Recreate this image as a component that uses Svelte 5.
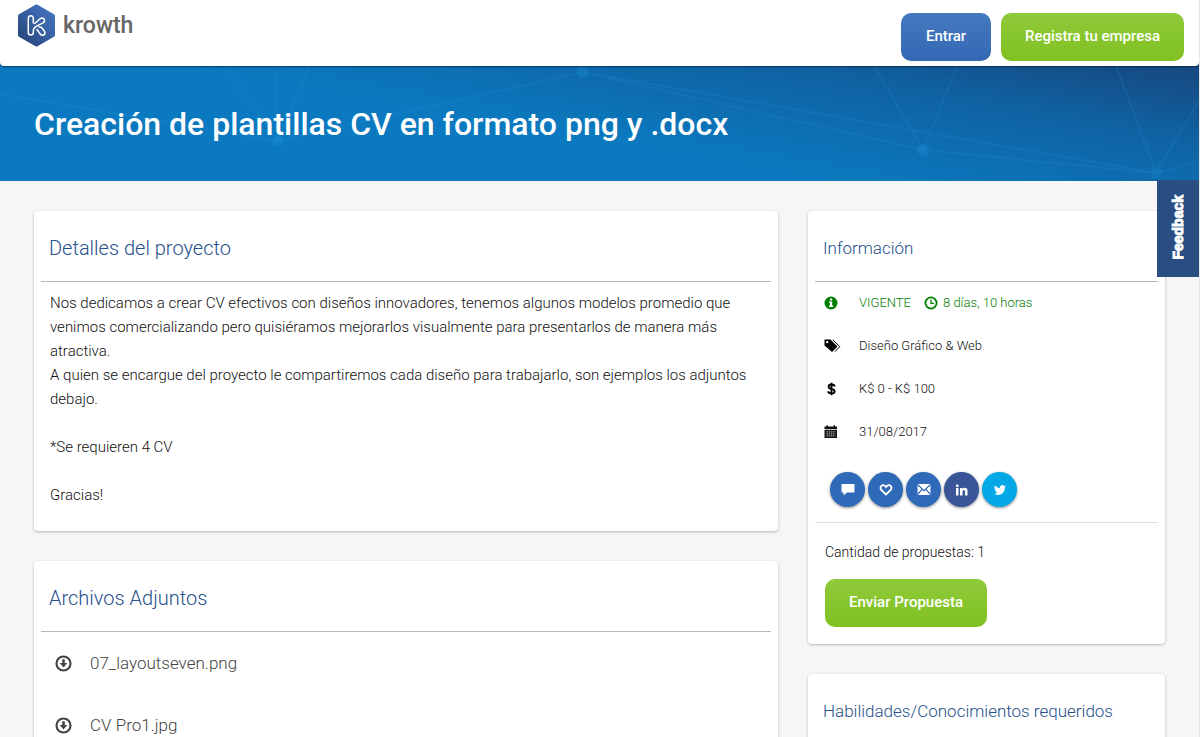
<script>
  const files = ['07_layoutseven.png', 'CV Pro1.jpg'];
</script>

<svelte:head><title>Krowth</title></svelte:head>

<div class="page">
  <header class="topbar">
    <a class="brand" href="#inicio" aria-label="krowth">
      <svg width="40" height="44" viewBox="0 0 40 44" aria-hidden="true">
        <defs>
          <linearGradient id="hex" x1="0" y1="1" x2="1" y2="0">
            <stop offset="0" stop-color="#284579" />
            <stop offset="1" stop-color="#4377c4" />
          </linearGradient>
        </defs>
        <path d="M20.500 2.500 37 12V31L20.500 40.500 4 31V12Z" fill="url(#hex)" stroke="url(#hex)" stroke-width="4" stroke-linejoin="round" />
        <path d="M17.300 19V14.500Q17.300 11.700 14.800 11.700T12.300 14.500V28.500Q12.300 31 14.800 31T17.300 28.500V26.500Q17.600 23.500 21 21.800L27 18.800Q29.500 17 28 15T24 14.800L18.800 19.500M21 25.500 24 29.800Q25.500 32 27.600 31T28.600 27.500L26 24Q25 22.800 23 23" fill="none" stroke="#fff" stroke-width="1.500" stroke-linecap="round" stroke-linejoin="round" />
      </svg>
      <span>krowth</span>
    </a>
    <nav class="actions" aria-label="Cuenta">
      <button class="btn blue">Entrar</button>
      <button class="btn green">Registra tu empresa</button>
    </nav>
  </header>

  <section class="hero">
    <svg class="net" viewBox="0 0 1200 115" preserveAspectRatio="none" aria-hidden="true">
      <g fill="none" stroke="#2a9be0" stroke-opacity=".18" stroke-width="1.500">
        <path d="M0 28 278 75 583 6 924 84 1157 107 583 6M225 0 278 75 275 0M278 75 310 0M875 0 924 84 958 0M1117 0 1157 107 1200 35M1157 107 1200 95" />
      </g>
      <g fill="#1b9ae0" fill-opacity=".28">
        <circle cx="278" cy="75" r="6" /><circle cx="583" cy="6" r="6" /><circle cx="924" cy="84" r="6" /><circle cx="1157" cy="107" r="6" fill-opacity=".14" />
      </g>
    </svg>
    <h1>Creación de plantillas CV en formato png y .docx</h1>
  </section>

  <main class="columns">
    <div class="col">
      <section class="card details">
        <h2>Detalles del proyecto</h2>
        <div class="prose">
          <p>Nos dedicamos a crear CV efectivos con diseños innovadores, tenemos algunos modelos promedio que venimos comercializando pero quisiéramos mejorarlos visualmente para presentarlos de manera más atractiva.<br />A quien se encargue del proyecto le compartiremos cada diseño para trabajarlo, son ejemplos los adjuntos debajo.</p>
          <p>*Se requieren 4 CV</p>
          <p>Gracias!</p>
        </div>
      </section>

      <section class="card">
        <h2>Archivos Adjuntos</h2>
        <ul class="files">
          {#each files as file}
            <li>
              <a href="#archivo">
                <svg width="17" height="17" viewBox="0 0 16 16" aria-hidden="true">
                  <circle cx="8" cy="8" r="6.600" fill="none" stroke="#444" stroke-width="2" />
                  <path d="M6.800 4H9.200V7.500H11.600L8 11.800 4.400 7.500H6.800Z" fill="#444" />
                </svg>
                <span>{file}</span>
              </a>
            </li>
          {/each}
        </ul>
      </section>
    </div>

    <aside class="col">
      <section class="card info">
        <h3>Información</h3>
        <ul class="facts">
          <li class="open">
            <svg width="14" height="14" viewBox="0 0 14 14" aria-hidden="true">
              <circle cx="7" cy="7" r="6.500" fill="currentColor" />
              <path d="M6 2.500H8.200V4.500H6ZM5 5.500H8.200V9.500H9.200V11H5V9.500H6V7H5Z" fill="#fff" />
            </svg>
            <span>VIGENTE</span>
            <span class="clock">
              <svg width="14" height="14" viewBox="0 0 14 14" aria-hidden="true">
                <circle cx="7" cy="7" r="5.600" fill="none" stroke="currentColor" stroke-width="1.800" />
                <path d="M7 3.500V7.300H10" fill="none" stroke="currentColor" stroke-width="1.300" />
              </svg>
              8 días, 10 horas
            </span>
          </li>
          <li>
            <svg width="18" height="14" viewBox="0 0 18 14" aria-hidden="true">
              <path fill-rule="evenodd" d="M.5 .5H6.500L13.500 7.500 8 13 .5 6.500ZM3.200 1.900A1.200 1.200 0 1 0 3.200 4.300 1.200 1.200 0 0 0 3.200 1.900Z" fill="#000" />
              <path d="M8.800 .8 15.800 7.600 11 12.600" fill="none" stroke="#000" stroke-width="1" />
            </svg>
            <span>Diseño Gráfico &amp; Web</span>
          </li>
          <li>
            <svg width="14" height="14" viewBox="0 0 14 14" aria-hidden="true">
              <path d="M10.700 4.500Q10.400 2.500 7.500 2.500T4.600 4.500 7.500 6.900 10.600 9.400 7.500 11.400 4.200 9.300M7.500 .8V13.200" fill="none" stroke="#000" stroke-width="1.900" />
            </svg>
            <span>K$ 0 - K$ 100</span>
          </li>
          <li>
            <svg width="14" height="14" viewBox="0 0 14 14" aria-hidden="true">
              <path d="M.5 1.500H2.500V.3H4V1.500H9.500V.3H11V1.500H13V4H.5ZM.5 4.800H13V13H.5Z" fill="#111" />
              <path d="M1.500 6.800H12M1.500 8.800H12M1.500 10.800H12M3.500 5.800V12M5.500 5.800V12M7.500 5.800V12M9.500 5.800V12" stroke="#999" stroke-width=".5" />
            </svg>
            <span>31/08/2017</span>
          </li>
        </ul>

        <div class="share">
          <button aria-label="Comentar">
            <svg width="14" height="14" viewBox="0 0 14 14" aria-hidden="true"><path d="M.5 1H13.500V9.500H6L2.500 12.500V9.500H.5Z" fill="#fff" /></svg>
          </button>
          <button aria-label="Me gusta">
            <svg width="14" height="14" viewBox="0 0 14 14" aria-hidden="true"><path d="M7 11.500 2.300 7Q.8 5 2.200 3.100 4.500 .9 7 4 9.500 .9 11.800 3.100 13.200 5 11.700 7Z" fill="none" stroke="#fff" stroke-width="1.800" /></svg>
          </button>
          <button aria-label="Enviar por correo">
            <svg width="14" height="14" viewBox="0 0 14 14" aria-hidden="true"><path d="M.5 1H13.500V12H.5Z" fill="#fff" /><path d="M.5 1.500 7 7.700 13.500 1.500M.5 11.500 5 6.300M13.500 11.500 9 6.300" fill="none" stroke="#2f6ab8" stroke-width="1.200" /></svg>
          </button>
          <button class="linkedin" aria-label="LinkedIn">
            <svg width="14" height="14" viewBox="0 0 14 14" aria-hidden="true"><path d="M1 5H3.500V12.500H1ZM5 5H7.400V6.100Q8.200 4.800 9.700 4.800 12.500 4.800 12.500 8V12.500H10V8.600Q10 7 8.800 7T7.500 8.600V12.500H5Z" fill="#fff" /><circle cx="2.250" cy="2.800" r="1.400" fill="#fff" /></svg>
          </button>
          <button class="twitter" aria-label="Twitter">
            <svg width="12" height="12" viewBox="0 0 24 24" aria-hidden="true"><path fill="#fff" d="M23.950 4.570a10 10 0 0 1-2.820.77 4.960 4.960 0 0 0 2.160-2.720c-.95.550-2 .950-3.130 1.180a4.920 4.920 0 0 0-8.380 4.480C7.690 8.090 4.070 6.130 1.640 3.160a4.920 4.920 0 0 0 1.520 6.570 4.900 4.900 0 0 1-2.230-.610v.06a4.920 4.920 0 0 0 3.950 4.830 5 5 0 0 1-2.210.08 4.940 4.940 0 0 0 4.600 3.420A9.870 9.870 0 0 1 0 19.540a14 14 0 0 0 7.550 2.210c9.050 0 14-7.500 14-13.980l-.02-.640a10 10 0 0 0 2.420-2.560Z" /></svg>
          </button>
        </div>

        <div class="offer">
          <p>Cantidad de propuestas: 1</p>
          <button class="btn green">Enviar Propuesta</button>
        </div>
      </section>

      <section class="card">
        <h3>Habilidades/Conocimientos requeridos</h3>
      </section>
    </aside>
  </main>

  <button class="feedback"><span>Feedback</span></button>
</div>

<style>
  :global(body) {
    background: #f6f6f6;
    overflow: hidden;
  }
  .page {
    height: 100vh;
    overflow: hidden;
    border-right: 1px solid #e6e6e6;
    font-family: Roboto, "Liberation Sans", sans-serif;
    font-weight: 300;
    color: #111;
  }
  button {
    font-family: inherit;
    border: 0;
    cursor: pointer;
  }
  h1, h2, h3, p, ul {
    margin: 0;
    padding: 0;
    list-style: none;
  }
  a {
    color: inherit;
    text-decoration: none;
  }
  svg {
    display: block;
    flex: none;
  }
  .topbar {
    position: relative;
    z-index: 1;
    display: flex;
    justify-content: space-between;
    align-items: flex-start;
    height: 66px;
    box-sizing: border-box;
    padding: 0 15px 0 16px;
    background: #fff;
    border-radius: 0 0 4px 4px;
    box-shadow: 0 1px 2px rgba(0, 20, 50, 0.6);
  }
  .brand {
    display: flex;
    align-items: center;
    gap: 7px;
    padding-top: 4px;
    font-size: 23px;
    line-height: 40px;
    font-weight: 500;
    color: #666;
  }
  .actions {
    display: flex;
    gap: 10px;
    padding-top: 13px;
  }
  .btn {
    min-width: 90px;
    height: 48px;
    padding: 0 24px 2px;
    border-radius: 10px;
    color: #fff;
    font-size: 15px;
    font-weight: 500;
    white-space: nowrap;
  }
  .blue {
    background: linear-gradient(#4579be, #3369b5);
  }
  .green {
    background: linear-gradient(#8fca39, #80c122);
  }
  .hero {
    position: relative;
    display: flex;
    align-items: center;
    height: 115px;
    margin-top: -4px;
    padding: 4px 34px 0;
    background: linear-gradient(190deg, #17467d 0%, #0f62a2 24%, #0b79bf 55%);
  }
  .net {
    position: absolute;
    inset: 4px 0 0;
    width: 100%;
    height: 115px;
  }
  h1 {
    position: relative;
    color: #fff;
    font-size: 32px;
    line-height: 40px;
    font-weight: 500;
  }
  .columns {
    display: grid;
    grid-template-columns: 744fr 357fr;
    gap: 30px;
    align-items: start;
    padding: 30px 34px 0;
  }
  .col {
    display: grid;
    gap: 30px;
    min-width: 0;
  }
  .card {
    padding: 0 7px;
    background: #fff;
    border-radius: 4px;
    box-shadow: 0 1px 3px rgba(0, 0, 0, 0.25);
  }
  h2, h3 {
    padding: 24px 8px 20px;
    border-bottom: 1px solid #b5b8b8;
    color: #25508a;
    font-size: 20px;
    line-height: 26px;
    font-weight: 300;
  }
  h3 {
    font-size: 17px;
  }
  .prose {
    display: grid;
    gap: 24px;
    padding: 9px 9px 24px;
    font-size: 15px;
    line-height: 24px;
  }
  .files li {
    padding: 19px 14px;
  }
  .files a {
    display: flex;
    align-items: center;
    gap: 18px;
    font-size: 17px;
    line-height: 24px;
    color: #444;
  }
  .facts {
    display: grid;
    gap: 19px;
    padding: 9px 9px 0;
    font-size: 13px;
    line-height: 24px;
  }
  .facts li {
    display: grid;
    grid-template-columns: 22px auto 1fr;
    gap: 13px;
    align-items: center;
  }
  .facts .open {
    color: #008000;
  }
  .clock {
    display: flex;
    align-items: center;
    gap: 5px;
  }
  .share {
    display: flex;
    gap: 3px;
    padding: 28px 15px 15px;
    border-bottom: 1px solid #ddd;
  }
  .share button {
    display: grid;
    place-items: center;
    width: 35px;
    height: 35px;
    padding: 0;
    border-radius: 50%;
    background: #2f6ab8;
    box-shadow: 0 1px 3px rgba(0, 0, 0, 0.45);
  }
  .share .linkedin {
    background: #3b5698;
  }
  .share .twitter {
    background: #03a9e6;
  }
  .offer {
    display: grid;
    justify-items: start;
    gap: 15px;
    padding: 17px 10px;
    font-size: 14px;
    line-height: 24px;
  }
  .feedback {
    position: fixed;
    top: 180px;
    right: 1px;
    width: 42px;
    height: 97px;
    padding: 0;
    background: #2a4e82;
    color: #fff;
    font-size: 14px;
    font-weight: 700;
    font-family: "Liberation Sans", sans-serif;
    -webkit-text-stroke: 1px #fff;
  }
  .feedback span {
    display: inline-block;
    writing-mode: vertical-rl;
    rotate: 180deg;
  }
</style>
